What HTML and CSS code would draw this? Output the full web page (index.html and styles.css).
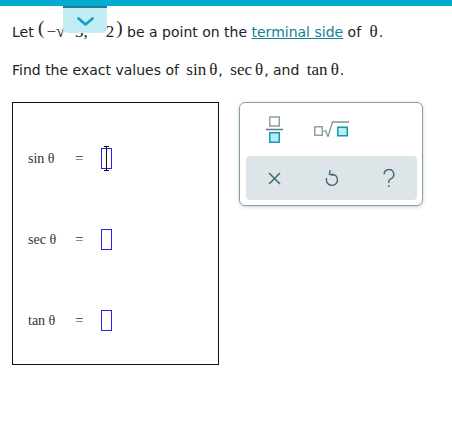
FILE: index.html
```html
<!DOCTYPE html>
<html lang="en">
<head>
    <meta charset="UTF-8">
    <meta name="viewport" content="width=device-width, initial-scale=1.0">
    <title>Trigonometry - Terminal Side</title>
    <link rel="stylesheet" href="styles.css">
</head>
<body>
<div class="top-bar"></div>

<div class="page">
    <!-- collapse tab sits over the first line of the question -->
    <div class="drop-tab">
        <svg width="19" height="11" viewBox="0 0 19 11">
            <path d="M2.5 2.5 L9.5 8.5 L16.5 2.5" fill="none" stroke="#0ea3c3" stroke-width="2.7" stroke-linecap="round" stroke-linejoin="round"/>
        </svg>
    </div>

    <p class="question">Let <span class="math"><span class="paren">(</span><span class="minus">−</span><span class="root">√</span><span class="radicand">3</span>,<span class="coord">2</span><span class="paren close">)</span></span> be a point on the <a href="#" class="term-link">terminal side</a> of <span class="math angle">θ</span>.</p>
    <p class="question second">Find the exact values of <span class="math fn">sin<span class="thin"></span>θ</span>, <span class="math fn">sec<span class="thin"></span>θ</span>, and <span class="math fn">tan<span class="thin"></span>θ</span>.</p>

    <div class="answer-area">
        <div class="answer-box">
            <div class="answer-row">
                <span class="label">sin θ</span>
                <span class="equals">=</span>
                <span class="slot"><span class="caret"></span></span>
            </div>
            <div class="answer-row">
                <span class="label">sec θ</span>
                <span class="equals">=</span>
                <span class="slot"></span>
            </div>
            <div class="answer-row">
                <span class="label">tan θ</span>
                <span class="equals">=</span>
                <span class="slot"></span>
            </div>
        </div>

        <div class="keypad">
            <div class="key-row">
                <button class="key" title="Fraction">
                    <svg width="17" height="28" viewBox="0 0 17 28">
                        <rect x="3.75" y="1" width="9.5" height="9" fill="#fff" stroke="#8ca2a9" stroke-width="1.5"/>
                        <line x1="0" y1="13.5" x2="17" y2="13.5" stroke="#5f7a82" stroke-width="1.5"/>
                        <rect x="3.75" y="16.75" width="9.5" height="9.5" fill="#b7ebf6" stroke="#1898b2" stroke-width="1.5"/>
                    </svg>
                </button>
                <button class="key" title="Root">
                    <svg width="37" height="17" viewBox="0 0 37 17">
                        <rect x="1.75" y="5.75" width="7.5" height="8.5" fill="#fff" stroke="#8ca2a9" stroke-width="1.5"/>
                        <path d="M10.5 10.5 L12.5 9.5 L15 15.5 L19.5 1 L36 1" fill="none" stroke="#7f959c" stroke-width="1.3" stroke-linejoin="round"/>
                        <rect x="24.75" y="6.25" width="9.5" height="8.5" fill="#b7ebf6" stroke="#1898b2" stroke-width="1.5"/>
                    </svg>
                </button>
                <span class="key empty"></span>
            </div>
            <div class="key-row tools">
                <button class="key" title="Clear">
                    <svg width="13" height="13" viewBox="0 0 13 13">
                        <path d="M1 1 L12 12 M12 1 L1 12" stroke="#3f6873" stroke-width="1.5"/>
                    </svg>
                </button>
                <button class="key" title="Undo">
                    <svg width="14" height="18" viewBox="0 0 14 18">
                        <path d="M6.5 5.2 A5.6 5.6 0 1 1 1.6 9" fill="none" stroke="#3f6873" stroke-width="1.4"/>
                        <path d="M5.3 1.2 L4.3 5.4 L8.6 6.2" fill="none" stroke="#3f6873" stroke-width="1.4" stroke-linejoin="round"/>
                    </svg>
                </button>
                <button class="key" title="Help">
                    <svg width="12" height="19" viewBox="0 0 12 19">
                        <path d="M1.2 5.2 A4.8 4.8 0 1 1 7.6 9.8 C6.4 10.4 5.8 11.2 5.8 12.6 L5.8 14" fill="none" stroke="#3f6873" stroke-width="1.4"/>
                        <circle cx="5.8" cy="17.2" r="0.9" fill="#3f6873"/>
                    </svg>
                </button>
            </div>
        </div>
    </div>
</div>
</body>
</html>
```

FILE: styles.css
```css
:root {
    --bar-color: #03abcf;
    --link-color: #137f95;
    --slot-color: #2d1ff0;
    --key-color: #3f6873;
    --panel-border: #7fa0a9;
}

body {
    margin: 0;
    font-family: 'DejaVu Sans', Verdana, sans-serif;
    font-size: 14px;
    color: #222;
    background-color: white;
}

.top-bar {
    height: 6px;
    background-color: var(--bar-color);
}

.page {
    position: relative;
    padding: 15.5px 12px 0;
}

.drop-tab {
    position: absolute;
    left: 63px;
    top: 0;
    width: 44px;
    height: 27px;
    box-sizing: border-box;
    padding-top: 8px;
    background-color: #c4ecf5;
    border-top: 2px solid #1d7d91;
    border-radius: 0 0 5px 5px;
    display: flex;
    justify-content: center;
    align-items: flex-start;
}

.question {
    margin: 0;
    line-height: 20px;
}

.question.second {
    margin-top: 18px;
}

.math {
    font-family: 'Liberation Serif', 'Times New Roman', serif;
    font-size: 17px;
    line-height: 16px;
}

.math.angle {
    margin-left: 4px;
    margin-right: 1px;
}

.math.fn {
    margin: 0 1px 0 3px;
}

.thin {
    display: inline-block;
    width: 3px;
}

.paren {
    font-size: 19px;
    line-height: 0;
    vertical-align: 3px;
}

.paren.close {
    margin-left: 2px;
}

.minus {
    margin-left: 2px;
}

.root {
    display: inline-block;
    width: 19px;
}

.radicand {
    border-top: 1px solid #222;
}

.coord {
    margin-left: 18px;
}

.term-link {
    color: var(--link-color);
    text-decoration: underline;
}

.answer-area {
    display: flex;
    align-items: flex-start;
    gap: 20px;
    margin-top: 22.5px;
}

.answer-box {
    width: 207px;
    height: 263px;
    box-sizing: border-box;
    border: 1px solid #111;
    padding: 45px 0 0 15px;
    display: flex;
    flex-direction: column;
    gap: 60px;
}

.answer-row {
    display: flex;
    align-items: center;
    height: 21px;
    font-family: 'Liberation Serif', 'Times New Roman', serif;
    font-size: 14px;
    color: #333;
}

.label {
    width: 47px;
}

.equals {
    width: 26px;
    font-size: 15px;
}

.slot {
    position: relative;
    width: 11px;
    height: 21px;
    box-sizing: border-box;
    border: 1px solid var(--slot-color);
}

.caret {
    position: absolute;
    left: 4px;
    top: -3px;
    width: 1px;
    height: 25px;
    background-color: #111;
}

.caret::before,
.caret::after {
    content: "";
    position: absolute;
    left: -2px;
    width: 5px;
    height: 1px;
    background-color: #111;
}

.caret::before {
    top: 0;
}

.caret::after {
    bottom: 0;
}

.keypad {
    width: 184px;
    height: 104px;
    box-sizing: border-box;
    border: 1px solid var(--panel-border);
    border-radius: 6px;
    box-shadow: 0 1px 4px rgba(0, 0, 0, 0.18);
    padding: 0 5px 5px 6px;
    display: flex;
    flex-direction: column;
}

.key-row {
    display: grid;
    grid-template-columns: repeat(3, 57px);
    height: 54px;
}

.key-row.tools {
    height: 44px;
    background-color: #dee5e9;
    border-radius: 4px;
}

.key {
    border: none;
    background: none;
    padding: 0;
    display: flex;
    align-items: center;
    justify-content: center;
    color: var(--key-color);
}
```
